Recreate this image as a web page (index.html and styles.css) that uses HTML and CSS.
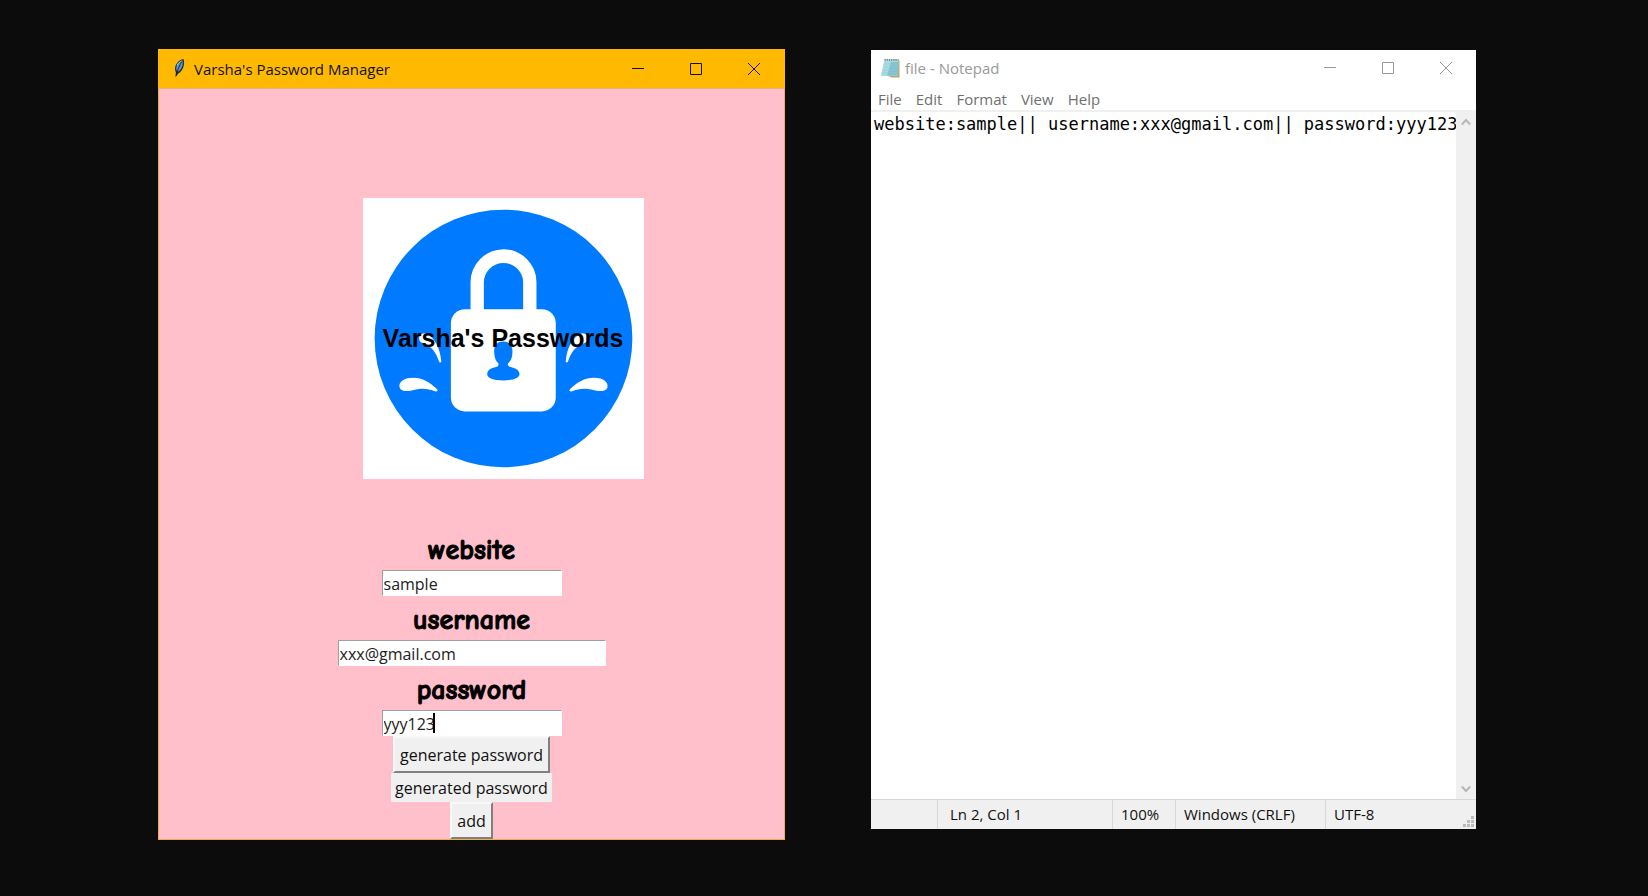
FILE: index.html
```html
<!DOCTYPE html>
<html lang="en">
<head>
<meta charset="utf-8">
<title>Varsha's Password Manager</title>
<link rel="stylesheet" href="styles.css">
</head>
<body>
<main class="desktop">
  <section class="window manager">
    <header class="titlebar">
      <svg class="app-icon feather" viewBox="0 0 20 22" aria-hidden="true">
        <path d="M6 21 L6.500 16 C4 10 7 3 15 1 C17 7 14.500 14 9 17.500 Z" fill="#22303c"/>
        <path d="M7.500 14 C5.500 9 9 4 14 2.300 C15 7 13 12 9.500 15 Z" fill="#5b96cf"/>
        <path d="M7 20 C8 14 10 9 13.500 3" fill="none" stroke="#17202b" stroke-width="1"/>
        <path d="M8 8 C9 5.500 11 4 13 3" fill="none" stroke="#b9d8f2" stroke-width="1"/>
      </svg>
      <h1 class="window-title">Varsha's Password Manager</h1>
      <div class="caption-buttons">
        <button class="caption-button" type="button" aria-label="Minimize"><svg viewBox="0 0 12 12"><path d="M0 5.500H12"/></svg></button>
        <button class="caption-button" type="button" aria-label="Maximize"><svg viewBox="0 0 12 12"><path d="M.5 .5H11.500V11.500H.5Z"/></svg></button>
        <button class="caption-button" type="button" aria-label="Close"><svg viewBox="0 0 12 12"><path d="M0 0L12 12M12 0L0 12"/></svg></button>
      </div>
    </header>
    <form class="manager-body">
      <div class="logo">
        <svg class="logo-art" viewBox="38 39 844 844" aria-hidden="true">
          <circle cx="460" cy="461" r="387" fill="#007bff"/>
          <path d="M361 390V292a99 99 0 0 1 198 0V390H519V293a59 59 0 0 0-118 0V390Z" fill="#fff"/>
          <rect x="302" y="373" width="315" height="307" rx="42" fill="#fff"/>
          <path d="M460 470c-18 0-29 11-28 30 0 18 5 30 13 36 1 8-3 10-13 12-14 3-21 11-21 20 0 12 18 19 49 19s48-7 48-19c0-9-8-17-22-20-9-2-14-4-13-12 9-6 14-18 14-36 0-19-10-30-27-30Z" fill="#007bff"/>
          <g id="drops" fill="#fff">
            <path d="M148 608c-4-15 11-29 40-29 29 0 51 14 72 34 4 4 1 8-4 7-27-11-45-10-72-3-18 4-32 2-36-9Z"/>
            <path d="M208 468c-4-13 2-23 16-23 28 9 45 43 49 83 1 6-5 7-7 1-10-27-21-41-37-49-11-5-18-6-21-12Z"/>
          </g>
          <use href="#drops" transform="matrix(-1 0 0 1 920 0)"/>
        </svg>
        <p class="logo-text">Varsha's Passwords</p>
      </div>
      <label class="field-label" for="website">website</label>
      <input class="field" id="website" type="text" value="sample">
      <label class="field-label" for="username">username</label>
      <input class="field field-wide" id="username" type="text" value="xxx@gmail.com">
      <label class="field-label" for="password">password</label>
      <div class="field-wrap">
        <input class="field" id="password" type="text" value="yyy123">
        <span class="caret"></span>
      </div>
      <button class="tk-button" type="button">generate password</button>
      <output class="result">generated password</output>
      <button class="tk-button" type="button">add</button>
    </form>
  </section>

  <section class="window notepad">
    <header class="titlebar">
      <svg class="app-icon note" viewBox="0 0 20 20" aria-hidden="true">
        <path d="M6 2.500H19.500V19.500H12L8 18Z" fill="#b7a76f"/>
        <path d="M4.500 1.500H18.500L18 18H.8Z" fill="#a9dbe3"/>
        <path d="M11 4H18.300L17.800 17.500H7Z" fill="#7fc0cd"/>
        <path d="M4 6H17.500M3.500 9H17.500M3 12H17.500M2.500 15H17.500" stroke="#94d0da" stroke-width=".7"/>
        <path d="M4.500 1.800H18.500" stroke="#717c80" stroke-width="1.800" stroke-dasharray="1.200 1"/>
      </svg>
      <h2 class="window-title">file - Notepad</h2>
      <div class="caption-buttons">
        <button class="caption-button" type="button" aria-label="Minimize"><svg viewBox="0 0 12 12"><path d="M0 5.500H12"/></svg></button>
        <button class="caption-button" type="button" aria-label="Maximize"><svg viewBox="0 0 12 12"><path d="M.5 .5H11.500V11.500H.5Z"/></svg></button>
        <button class="caption-button" type="button" aria-label="Close"><svg viewBox="0 0 12 12"><path d="M0 0L12 12M12 0L0 12"/></svg></button>
      </div>
    </header>
    <nav class="menu">
      <button type="button">File</button>
      <button type="button">Edit</button>
      <button type="button">Format</button>
      <button type="button">View</button>
      <button type="button">Help</button>
    </nav>
    <div class="editor">
      <textarea class="editor-text" aria-label="Document" spellcheck="false" wrap="off">website:sample|| username:xxx@gmail.com|| password:yyy123</textarea>
      <div class="scrollbar">
        <button type="button" aria-label="Scroll up"><svg viewBox="0 0 10 8"><path d="M.8 6.500L5 2L9.200 6.500"/></svg></button>
        <button type="button" aria-label="Scroll down"><svg viewBox="0 0 10 8"><path d="M.8 1.500L5 6L9.200 1.500"/></svg></button>
      </div>
    </div>
    <footer class="status">
      <span></span>
      <span class="position">Ln 2, Col 1</span>
      <span>100%</span>
      <span>Windows (CRLF)</span>
      <span>UTF-8</span>
      <svg class="grip" viewBox="0 0 11 11" aria-hidden="true"><path d="M8 0h3v3H8zM4 4h3v3H4zM8 4h3v3H8zM0 8h3v3H0zM4 8h3v3H4zM8 8h3v3H8z"/></svg>
    </footer>
  </section>
</main>
</body>
</html>
```
FILE: styles.css
```css
* { box-sizing: border-box; }

body {
  margin: 0;
  background: #0c0c0c;
  color: #111;
  font: 16px/22px "Segoe UI", "Open Sans", "Noto Sans", sans-serif;
}

button, input, textarea { font: inherit; color: inherit; margin: 0; border-radius: 0; }
button { padding: 0; border: 0; background: none; }

.desktop {
  display: grid;
  grid-template-columns: 158fr 627fr 86fr 605fr 172fr;
  min-height: 100vh;
  padding: 49px 0 56px;
}

.window { display: flex; flex-direction: column; min-width: 0; }
.titlebar { display: flex; align-items: center; }
.window-title { margin: 0; font-size: 15px; font-weight: 400; line-height: 22px; white-space: nowrap; }
.app-icon { flex: none; }
.caption-buttons { display: flex; align-self: stretch; margin-left: auto; }
.caption-button { display: grid; place-items: center; width: 58px; }
.caption-button svg { width: 12px; height: 12px; fill: none; stroke: currentColor; stroke-width: 1; overflow: visible; }

.manager { grid-column: 2; border: 1px solid #f0ad4a; border-top: 0; background: #ffc0cb; }
.manager .titlebar { height: 40px; margin: 0 -1px; padding: 0 2px 0 12px; border-bottom: 1px solid #f0b080; background: #ffb900; }
.feather { width: 18px; height: 22px; margin: 0 6px 2px 0; }

.manager-body { display: flex; flex-direction: column; align-items: center; padding-top: 109px; }
.logo { position: relative; width: 281px; margin: 0 0 47px 63px; background: #fff; }
.logo-art { display: block; width: 100%; }
.logo-text {
  position: absolute;
  inset: 0;
  display: grid;
  place-items: center;
  margin: 0;
  padding-bottom: 2px;
  color: #000;
  font: bold 25px/28px Arial, "Liberation Sans", sans-serif;
  white-space: nowrap;
}

.field-label {
  height: 44px;
  padding-top: 4px;
  color: #000;
  font: bold 28px/40px "Comic Sans MS", "Comic Neue", "Open Sans", sans-serif;
  -webkit-text-stroke: 1px #000;
}
.field {
  display: block;
  width: 180px;
  height: 26px;
  padding: 1px 1px 0;
  border: 1px solid #fff;
  border-top-color: #a0a0a0;
  border-left-color: #a0a0a0;
  background: #fff;
  color: #222;
  outline: 0;
}
.field-wide { width: 268px; }
.field-wrap { position: relative; }
.caret { position: absolute; top: 3px; left: 51px; width: 2px; height: 20px; background: #000; }
.tk-button {
  padding: 6px 5px 5px;
  border: 2px solid #f8f8f8;
  border-right-color: #808080;
  border-bottom-color: #808080;
  background: #f0f0f0;
}
.result { padding: 4px 4px 2px; background: #f0f0f0; line-height: 23px; }

.notepad { grid-column: 4; margin: 1px 0 11px; background: #fff; }
.notepad .titlebar { height: 36px; padding: 0 1px 0 9px; color: #999; }
.note { width: 20px; height: 20px; margin-right: 5px; }
.menu { display: flex; gap: 14px; padding: 2px 7px 0; border-bottom: 2px solid #f0f0f0; color: #707070; font-size: 15px; }
.editor { display: flex; flex: 1; min-height: 0; }
.editor-text {
  flex: 1;
  min-width: 0;
  padding: 2px 0 0 3px;
  border: 0;
  outline: 0;
  background: #fff;
  color: #000;
  font: 17px/20px Consolas, "DejaVu Sans Mono", monospace;
  font-family: "DejaVu Sans Mono", monospace;
  resize: none;
  overflow: hidden;
  white-space: pre;
}
.scrollbar { display: flex; flex-direction: column; justify-content: space-between; width: 20px; background: #f0f0f0; }
.scrollbar button { display: grid; place-items: center; height: 20px; }
.scrollbar svg { width: 10px; height: 8px; fill: none; stroke: #b8b8b8; stroke-width: 2; }

.status {
  position: relative;
  display: grid;
  grid-template-columns: 67fr 175fr 63fr 150fr 150fr;
  height: 30px;
  border-top: 1px solid #d7d7d7;
  background: #f0f0f0;
  font-size: 15px;
  line-height: 29px;
  white-space: nowrap;
}
.status span { padding-left: 8px; border-right: 1px solid #d7d7d7; }
.status span:last-of-type { border-right: 0; }
.status .position { padding-left: 12px; }
.grip { position: absolute; right: 2px; bottom: 2px; width: 11px; height: 11px; fill: #bbb; }
```
